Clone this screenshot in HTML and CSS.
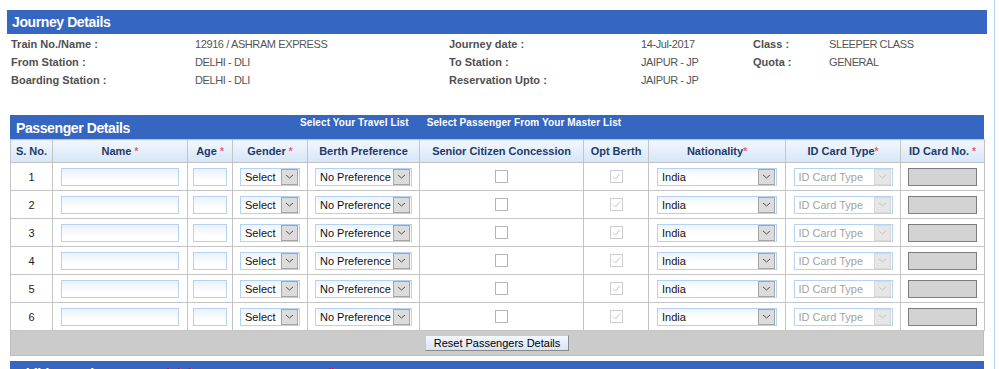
FILE: index.html
```html
<!DOCTYPE html>
<html>
<head>
<meta charset="utf-8">
<title>Journey Details</title>
<link rel="stylesheet" href="styles.css">
</head>
<body>
<div class="page">
  <section class="journey">
    <h2 class="bar jbar">Journey Details</h2>
    <div class="info">
      <span class="lbl">Train No./Name :</span><span class="val">12916 / ASHRAM EXPRESS</span><span class="lbl">Journey date :</span><span class="val">14-Jul-2017</span><span class="lbl">Class :</span><span class="val">SLEEPER CLASS</span>
      <span class="lbl">From Station :</span><span class="val">DELHI - DLI</span><span class="lbl">To Station :</span><span class="val">JAIPUR - JP</span><span class="lbl">Quota :</span><span class="val">GENERAL</span>
      <span class="lbl">Boarding Station :</span><span class="val">DELHI - DLI</span><span class="lbl">Reservation Upto :</span><span class="val">JAIPUR - JP</span><span class="lbl"></span><span class="val"></span>
    </div>
  </section>

  <section class="passengers">
    <div class="bar pbar">
      <h2 class="ptitle">Passenger Details</h2>
      <div class="links"><a>Select Your Travel List</a><a>Select Passenger From Your Master List</a></div>
    </div>
    <table class="ptable">
      <colgroup>
        <col class="c1"><col class="c2"><col class="c3"><col class="c4"><col class="c5"><col class="c6"><col class="c7"><col class="c8"><col class="c9"><col class="c10">
      </colgroup>
      <thead>
        <tr>
          <th>S. No.</th>
          <th>Name <span class="req">*</span></th>
          <th>Age <span class="req">*</span></th>
          <th>Gender <span class="req">*</span></th>
          <th>Berth Preference</th>
          <th>Senior Citizen Concession</th>
          <th>Opt Berth</th>
          <th>Nationality<span class="req">*</span></th>
          <th>ID Card Type<span class="req">*</span></th>
          <th>ID Card No. <span class="req">*</span></th>
        </tr>
      </thead>
      <tbody>
        <tr>
          <td>1</td>
          <td><span class="inp name"></span></td>
          <td><span class="inp age"></span></td>
          <td><span class="sel gender"><span class="sel-text">Select</span><span class="arrow"><svg viewBox="0 0 9 5" width="9" height="5"><polyline points="1,1 4.5,4 8,1" fill="none" stroke="#555" stroke-width="1"/></svg></span></span></td>
          <td><span class="sel berth"><span class="sel-text">No Preference</span><span class="arrow"><svg viewBox="0 0 9 5" width="9" height="5"><polyline points="1,1 4.5,4 8,1" fill="none" stroke="#555" stroke-width="1"/></svg></span></span></td>
          <td><span class="chk"></span></td>
          <td><span class="chk dis"><svg viewBox="0 0 13 13" width="11" height="11"><polyline points="2.5,6.5 5.5,9.5 10.5,3" fill="none" stroke="#b8b8b8" stroke-width="1"/></svg></span></td>
          <td><span class="sel nat"><span class="sel-text">India</span><span class="arrow"><svg viewBox="0 0 9 5" width="9" height="5"><polyline points="1,1 4.5,4 8,1" fill="none" stroke="#555" stroke-width="1"/></svg></span></span></td>
          <td><span class="sel idtype off"><span class="sel-text">ID Card Type</span><span class="arrow"><svg viewBox="0 0 9 5" width="9" height="5"><polyline points="1,1 4.5,4 8,1" fill="none" stroke="#c4c4c4" stroke-width="1"/></svg></span></span></td>
          <td><span class="idno"></span></td>
        </tr>
        <tr>
          <td>2</td>
          <td><span class="inp name"></span></td>
          <td><span class="inp age"></span></td>
          <td><span class="sel gender"><span class="sel-text">Select</span><span class="arrow"><svg viewBox="0 0 9 5" width="9" height="5"><polyline points="1,1 4.5,4 8,1" fill="none" stroke="#555" stroke-width="1"/></svg></span></span></td>
          <td><span class="sel berth"><span class="sel-text">No Preference</span><span class="arrow"><svg viewBox="0 0 9 5" width="9" height="5"><polyline points="1,1 4.5,4 8,1" fill="none" stroke="#555" stroke-width="1"/></svg></span></span></td>
          <td><span class="chk"></span></td>
          <td><span class="chk dis"><svg viewBox="0 0 13 13" width="11" height="11"><polyline points="2.5,6.5 5.5,9.5 10.5,3" fill="none" stroke="#b8b8b8" stroke-width="1"/></svg></span></td>
          <td><span class="sel nat"><span class="sel-text">India</span><span class="arrow"><svg viewBox="0 0 9 5" width="9" height="5"><polyline points="1,1 4.5,4 8,1" fill="none" stroke="#555" stroke-width="1"/></svg></span></span></td>
          <td><span class="sel idtype off"><span class="sel-text">ID Card Type</span><span class="arrow"><svg viewBox="0 0 9 5" width="9" height="5"><polyline points="1,1 4.5,4 8,1" fill="none" stroke="#c4c4c4" stroke-width="1"/></svg></span></span></td>
          <td><span class="idno"></span></td>
        </tr>
        <tr>
          <td>3</td>
          <td><span class="inp name"></span></td>
          <td><span class="inp age"></span></td>
          <td><span class="sel gender"><span class="sel-text">Select</span><span class="arrow"><svg viewBox="0 0 9 5" width="9" height="5"><polyline points="1,1 4.5,4 8,1" fill="none" stroke="#555" stroke-width="1"/></svg></span></span></td>
          <td><span class="sel berth"><span class="sel-text">No Preference</span><span class="arrow"><svg viewBox="0 0 9 5" width="9" height="5"><polyline points="1,1 4.5,4 8,1" fill="none" stroke="#555" stroke-width="1"/></svg></span></span></td>
          <td><span class="chk"></span></td>
          <td><span class="chk dis"><svg viewBox="0 0 13 13" width="11" height="11"><polyline points="2.5,6.5 5.5,9.5 10.5,3" fill="none" stroke="#b8b8b8" stroke-width="1"/></svg></span></td>
          <td><span class="sel nat"><span class="sel-text">India</span><span class="arrow"><svg viewBox="0 0 9 5" width="9" height="5"><polyline points="1,1 4.5,4 8,1" fill="none" stroke="#555" stroke-width="1"/></svg></span></span></td>
          <td><span class="sel idtype off"><span class="sel-text">ID Card Type</span><span class="arrow"><svg viewBox="0 0 9 5" width="9" height="5"><polyline points="1,1 4.5,4 8,1" fill="none" stroke="#c4c4c4" stroke-width="1"/></svg></span></span></td>
          <td><span class="idno"></span></td>
        </tr>
        <tr>
          <td>4</td>
          <td><span class="inp name"></span></td>
          <td><span class="inp age"></span></td>
          <td><span class="sel gender"><span class="sel-text">Select</span><span class="arrow"><svg viewBox="0 0 9 5" width="9" height="5"><polyline points="1,1 4.5,4 8,1" fill="none" stroke="#555" stroke-width="1"/></svg></span></span></td>
          <td><span class="sel berth"><span class="sel-text">No Preference</span><span class="arrow"><svg viewBox="0 0 9 5" width="9" height="5"><polyline points="1,1 4.5,4 8,1" fill="none" stroke="#555" stroke-width="1"/></svg></span></span></td>
          <td><span class="chk"></span></td>
          <td><span class="chk dis"><svg viewBox="0 0 13 13" width="11" height="11"><polyline points="2.5,6.5 5.5,9.5 10.5,3" fill="none" stroke="#b8b8b8" stroke-width="1"/></svg></span></td>
          <td><span class="sel nat"><span class="sel-text">India</span><span class="arrow"><svg viewBox="0 0 9 5" width="9" height="5"><polyline points="1,1 4.5,4 8,1" fill="none" stroke="#555" stroke-width="1"/></svg></span></span></td>
          <td><span class="sel idtype off"><span class="sel-text">ID Card Type</span><span class="arrow"><svg viewBox="0 0 9 5" width="9" height="5"><polyline points="1,1 4.5,4 8,1" fill="none" stroke="#c4c4c4" stroke-width="1"/></svg></span></span></td>
          <td><span class="idno"></span></td>
        </tr>
        <tr>
          <td>5</td>
          <td><span class="inp name"></span></td>
          <td><span class="inp age"></span></td>
          <td><span class="sel gender"><span class="sel-text">Select</span><span class="arrow"><svg viewBox="0 0 9 5" width="9" height="5"><polyline points="1,1 4.5,4 8,1" fill="none" stroke="#555" stroke-width="1"/></svg></span></span></td>
          <td><span class="sel berth"><span class="sel-text">No Preference</span><span class="arrow"><svg viewBox="0 0 9 5" width="9" height="5"><polyline points="1,1 4.5,4 8,1" fill="none" stroke="#555" stroke-width="1"/></svg></span></span></td>
          <td><span class="chk"></span></td>
          <td><span class="chk dis"><svg viewBox="0 0 13 13" width="11" height="11"><polyline points="2.5,6.5 5.5,9.5 10.5,3" fill="none" stroke="#b8b8b8" stroke-width="1"/></svg></span></td>
          <td><span class="sel nat"><span class="sel-text">India</span><span class="arrow"><svg viewBox="0 0 9 5" width="9" height="5"><polyline points="1,1 4.5,4 8,1" fill="none" stroke="#555" stroke-width="1"/></svg></span></span></td>
          <td><span class="sel idtype off"><span class="sel-text">ID Card Type</span><span class="arrow"><svg viewBox="0 0 9 5" width="9" height="5"><polyline points="1,1 4.5,4 8,1" fill="none" stroke="#c4c4c4" stroke-width="1"/></svg></span></span></td>
          <td><span class="idno"></span></td>
        </tr>
        <tr>
          <td>6</td>
          <td><span class="inp name"></span></td>
          <td><span class="inp age"></span></td>
          <td><span class="sel gender"><span class="sel-text">Select</span><span class="arrow"><svg viewBox="0 0 9 5" width="9" height="5"><polyline points="1,1 4.5,4 8,1" fill="none" stroke="#555" stroke-width="1"/></svg></span></span></td>
          <td><span class="sel berth"><span class="sel-text">No Preference</span><span class="arrow"><svg viewBox="0 0 9 5" width="9" height="5"><polyline points="1,1 4.5,4 8,1" fill="none" stroke="#555" stroke-width="1"/></svg></span></span></td>
          <td><span class="chk"></span></td>
          <td><span class="chk dis"><svg viewBox="0 0 13 13" width="11" height="11"><polyline points="2.5,6.5 5.5,9.5 10.5,3" fill="none" stroke="#b8b8b8" stroke-width="1"/></svg></span></td>
          <td><span class="sel nat"><span class="sel-text">India</span><span class="arrow"><svg viewBox="0 0 9 5" width="9" height="5"><polyline points="1,1 4.5,4 8,1" fill="none" stroke="#555" stroke-width="1"/></svg></span></span></td>
          <td><span class="sel idtype off"><span class="sel-text">ID Card Type</span><span class="arrow"><svg viewBox="0 0 9 5" width="9" height="5"><polyline points="1,1 4.5,4 8,1" fill="none" stroke="#c4c4c4" stroke-width="1"/></svg></span></span></td>
          <td><span class="idno"></span></td>
        </tr>
      </tbody>
    </table>
    <div class="reset-bar"><span class="btn">Reset Passengers Details</span></div>
  </section>

  <div class="bar cbar">Children Below 5 Years <span class="note">(Ticket Is Not To Be Issued)</span></div>
</div>
</body>
</html>
```

FILE: styles.css
```css
html, body {
  margin: 0;
  padding: 0;
  background: #fff;
}
body {
  font-family: "Liberation Sans", Arial, sans-serif;
  font-size: 11px;
  color: #333;
  overflow: hidden;
}
.page {
  width: 995px;
  min-height: 369px;
  border-right: 1px solid #b9d3f5;
  box-sizing: border-box;
  padding-top: 10px;
}
.bar {
  background: #3566c2;
  color: #fff;
  font-weight: bold;
  font-size: 14px;
  letter-spacing: -0.4px;
  margin: 0;
  height: 24px;
  line-height: 24px;
  box-sizing: border-box;
}
.journey {
  margin-left: 7px;
  width: 980px;
}
.jbar {
  padding-left: 5px;
}
.info {
  display: grid;
  grid-template-columns: 184px 254px 192px 112px 76px 1fr;
  padding: 1px 0 0 4px;
  line-height: 18px;
  font-size: 11px;
  color: #555;
}
.lbl {
  font-weight: bold;
  color: #505050;
}
.val {
  color: #555;
  letter-spacing: -0.4px;
}

.passengers {
  margin: 26px 0 0 10px;
  width: 974px;
}
.pbar {
  display: flex;
  align-items: flex-start;
  padding-left: 6px;
}
.ptitle {
  margin: 0;
  font-size: 14px;
  width: 284px;
  flex-shrink: 0;
  line-height: 24px;
  padding-top: 1px;
}
.links {
  display: flex;
  gap: 18px;
  font-size: 10px;
  letter-spacing: 0.1px;
  line-height: 14px;
  padding-top: 1px;
}
.links a {
  color: #fff;
}

.ptable {
  width: 974px;
  border-collapse: collapse;
  table-layout: fixed;
}
.c1 { width: 42px; }
.c2 { width: 135px; }
.c3 { width: 45px; }
.c4 { width: 75px; }
.c5 { width: 112px; }
.c6 { width: 164px; }
.c7 { width: 65px; }
.c8 { width: 137px; }
.c9 { width: 115px; }
.c10 { width: 84px; }
.ptable th,
.ptable td {
  border: 1px solid #c4c4c4;
  padding: 0;
  text-align: center;
  vertical-align: middle;
}
.ptable th {
  height: 22px;
  font-size: 11px;
  font-weight: bold;
  color: #1e3a6b;
  background: linear-gradient(#f2f7fd, #d7e6f8);
  white-space: nowrap;
}
.req {
  color: #f2557a;
  font-size: 10px;
}
.ptable td {
  height: 27px;
  font-size: 11px;
  color: #222;
}
.inp {
  display: inline-block;
  vertical-align: middle;
  height: 18px;
  box-sizing: border-box;
  border: 1px solid #b6d2f2;
  background: linear-gradient(#e9f1fb, #ffffff 70%);
}
.inp.name { width: 118px; }
.inp.age { width: 34px; }

.sel {
  display: inline-flex;
  vertical-align: middle;
  align-items: center;
  height: 18px;
  box-sizing: border-box;
  border: 1px solid #b6d2f2;
  background: linear-gradient(#eef4fc, #ffffff 60%);
  text-align: left;
  padding: 0 1px 0 4px;
  color: #111;
}
.sel.gender { width: 60px; }
.sel.berth { width: 97px; }
.sel.nat { width: 120px; }
.sel.idtype { width: 99px; }
.sel-text {
  flex: 1;
  line-height: 16px;
  white-space: nowrap;
  overflow: hidden;
}
.arrow {
  width: 17px;
  height: 16px;
  box-sizing: border-box;
  border: 1px solid #a4a4a4;
  background: #dcdcdc;
  display: flex;
  align-items: center;
  justify-content: center;
}
.sel.off {
  color: #a3a3a3;
  background: #fff;
}
.sel.off .arrow {
  background: #e6e6e6;
  border-color: #d8d8d8;
}

.chk {
  display: inline-flex;
  vertical-align: middle;
  align-items: center;
  justify-content: center;
  width: 13px;
  height: 13px;
  box-sizing: border-box;
  border: 1px solid #b4b4b4;
  background: #fff;
}
.chk.dis {
  border-color: #cfcfcf;
}
.idno {
  display: inline-block;
  vertical-align: middle;
  width: 69px;
  height: 18px;
  box-sizing: border-box;
  border: 1px solid #7d7d7d;
  background: #d3d3d3;
}

.reset-bar {
  height: 25px;
  box-sizing: border-box;
  background: #cbcbcb;
  border: 1px solid #bdbdbd;
  border-top: 0;
  display: flex;
  justify-content: center;
  align-items: center;
}
.btn {
  display: inline-block;
  height: 16px;
  line-height: 14px;
  box-sizing: border-box;
  padding: 0 8px;
  border: 1px solid #8a8a8a;
  border-top-color: #c8c8c8;
  border-left-color: #c8c8c8;
  background: linear-gradient(#f4f8fd, #d6e4f6);
  font-size: 11px;
  color: #000;
  white-space: nowrap;
  text-align: center;
}

.cbar {
  margin: 5px 0 0 10px;
  width: 974px;
  padding-left: 6px;
  line-height: 26px;
}
.note {
  color: #e0096a;
}
```
